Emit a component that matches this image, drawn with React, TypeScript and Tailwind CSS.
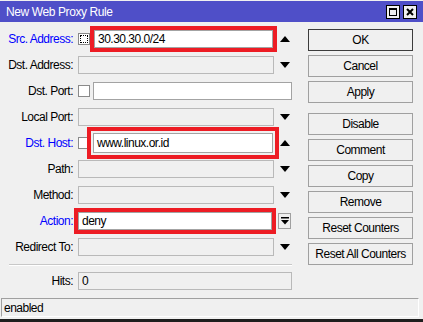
import type { ReactNode } from "react";

const font = { fontFamily: '"Liberation Sans", Arial, sans-serif' };

function UpArrow() {
  return (
    <svg width="10" height="6" viewBox="0 0 10 6">
      <polygon points="0,6 5,0 10,6" fill="#000" />
    </svg>
  );
}

function DownArrow() {
  return (
    <svg width="10" height="6" viewBox="0 0 10 6">
      <polygon points="0,0 10,0 5,6" fill="#000" />
    </svg>
  );
}

function Row({ label, blue, children }: { label: string; blue?: boolean; children: ReactNode }) {
  return (
    <div className="flex items-center h-[26px]">
      <div className={`w-[73px] text-right whitespace-nowrap ${blue ? "text-[#0000ff]" : "text-black"}`}>
        {label}
      </div>
      <div className="ml-[5px] w-[214px] flex items-center">{children}</div>
    </div>
  );
}

function Field({
  value,
  enabled,
  className = "",
}: {
  value?: string;
  enabled?: boolean;
  className?: string;
}) {
  return (
    <div
      className={`h-[18px] border flex items-center pl-[3px] ${
        enabled ? "bg-white border-[#a3a3a3]" : "bg-[#f0f0f0] border-[#b9b9b9]"
      } ${className}`}
    >
      {value}
    </div>
  );
}

function Check({ focus }: { focus?: boolean }) {
  return (
    <div className="w-[12px] h-[12px] shrink-0 border border-[#8a8a8a] bg-white flex items-center justify-center">
      {focus && <div className="w-[8px] h-[8px] border border-dotted border-black" />}
    </div>
  );
}

function Btn({ label, primary, className = "" }: { label: string; primary?: boolean; className?: string }) {
  return (
    <div
      className={`h-[22px] w-[105px] flex items-center justify-center bg-[#f0f0f0] border ${
        primary ? "border-[#3c3c3c]" : "border-[#a0a0a0]"
      } ${className}`}
    >
      {label}
    </div>
  );
}

export default function App() {
  return (
    <div
      className="w-[423px] h-[322px] bg-[#f0f0f0] text-[12px] tracking-[-0.5px] text-black flex flex-col overflow-hidden"
      style={font}
    >
      {/* Title bar */}
      <div className="mt-[1px] h-[21px] bg-[#4f4fc8] flex items-center pl-[6px] pr-[6px] shrink-0">
        <span className="text-white tracking-[-0.4px]">New Web Proxy Rule</span>
        <div className="ml-auto flex gap-[3px]">
          <div className="w-[14px] h-[14px] bg-[#f0f0f0] border border-black flex items-center justify-center">
            <div className="w-[8px] h-[8px] border border-black border-t-2" />
          </div>
          <div className="w-[14px] h-[14px] bg-[#f0f0f0] border border-black flex items-center justify-center">
            <svg width="8" height="8" viewBox="0 0 8 8">
              <path d="M1 1 L7 7 M7 1 L1 7" stroke="#000" strokeWidth="2" />
            </svg>
          </div>
        </div>
      </div>

      <div className="flex">
        {/* Fields */}
        <div className="flex flex-col pt-[4px]">
          <Row label="Src. Address:" blue>
            <Check focus />
            <Field
              value="30.30.30.0/24"
              enabled
              className="ml-[4px] w-[179px] outline-4 outline-[#ed1c24] outline-offset-0"
            />
            <div className="ml-[4px] w-[15px] flex justify-center">
              <UpArrow />
            </div>
          </Row>
          <Row label="Dst. Address:">
            <Field className="w-[196px]" />
            <div className="ml-[3px] w-[15px] flex justify-center">
              <DownArrow />
            </div>
          </Row>
          <Row label="Dst. Port:">
            <Check />
            <Field enabled className="ml-[3px] flex-1" />
          </Row>
          <Row label="Local Port:">
            <Field className="w-[196px]" />
            <div className="ml-[3px] w-[15px] flex justify-center">
              <DownArrow />
            </div>
          </Row>
          <Row label="Dst. Host:" blue>
            <Check />
            <Field
              value="www.linux.or.id"
              enabled
              className="ml-[3px] w-[181px] h-[20px] outline-4 outline-[#ed1c24] outline-offset-[2px]"
            />
            <div className="ml-[4px] w-[15px] flex justify-center">
              <UpArrow />
            </div>
          </Row>
          <Row label="Path:">
            <Field className="w-[196px]" />
            <div className="ml-[3px] w-[15px] flex justify-center">
              <DownArrow />
            </div>
          </Row>
          <Row label="Method:">
            <Field className="w-[196px]" />
            <div className="ml-[3px] w-[15px] flex justify-center">
              <DownArrow />
            </div>
          </Row>
          <Row label="Action:" blue>
            <Field
              value="deny"
              enabled
              className="w-[194px] outline-4 outline-[#ed1c24] outline-offset-0"
            />
            <div className="ml-[6px] w-[13px] h-[16px] border border-[#a0a0a0] bg-[#f0f0f0] flex items-center justify-center">
              <svg width="8" height="8" viewBox="0 0 8 8">
                <rect x="0" y="0" width="8" height="1.5" fill="#000" />
                <polygon points="0,3 8,3 4,7.5" fill="#000" />
              </svg>
            </div>
          </Row>
          <Row label="Redirect To:">
            <Field className="w-[196px]" />
            <div className="ml-[3px] w-[15px] flex justify-center">
              <DownArrow />
            </div>
          </Row>

          <div className="ml-[9px] mt-[4px] w-[283px] h-[1px] bg-[#c8c8c8] border-b border-white box-content" />

          <div className="flex items-center mt-[6px]">
            <div className="w-[73px] text-right">Hits:</div>
            <Field value="0" className="ml-[5px] w-[214px]" />
          </div>
        </div>

        {/* Buttons */}
        <div className="ml-[16px] pt-[7px] flex flex-col gap-[4px]">
          <Btn label="OK" primary />
          <Btn label="Cancel" />
          <Btn label="Apply" />
          <Btn label="Disable" className="mt-[6px]" />
          <Btn label="Comment" />
          <Btn label="Copy" />
          <Btn label="Remove" />
          <Btn label="Reset Counters" />
          <Btn label="Reset All Counters" />
        </div>
      </div>

      {/* Status bar */}
      <div className="mt-[8px] ml-[1px] w-[418px] h-[19px] border-t border-l border-[#a0a0a0] border-r border-r-white border-b border-b-white flex items-center pl-[2px]">
        enabled
      </div>
      <div className="mt-auto h-[3px] bg-[#1e1e1e]" />
    </div>
  );
}
